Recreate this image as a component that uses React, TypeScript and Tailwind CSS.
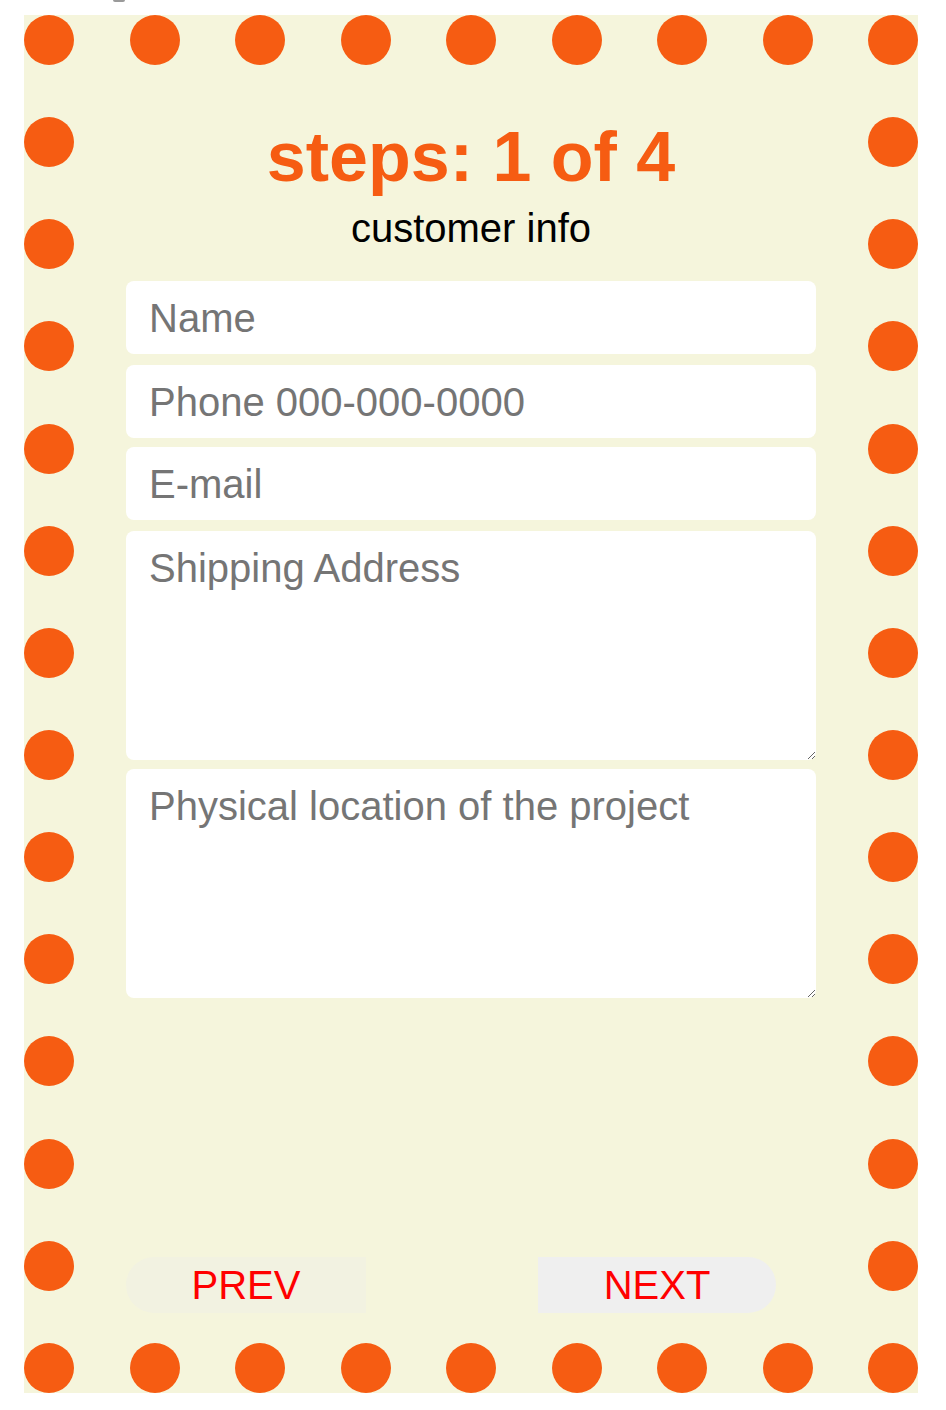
import React from "react";

const Dot = () => (
  <div className="w-[50px] h-[50px] rounded-full bg-[#f65c12] shrink-0" />
);

const range = (n: number) => Array.from({ length: n }, (_, i) => i);

export default function App() {
  return (
    <div className="w-[946px] min-h-[1410px] bg-white font-['Liberation_Sans',Arial,Helvetica,sans-serif]">
      <div className="h-[15px]">
        <div className="ml-[113px] w-[12px] h-[2px] rounded-b-full bg-[#9a9a9a]" />
      </div>
      <div className="ml-[24px] w-[894px] h-[1378px] bg-[#f5f5dc] flex">
        <div className="flex flex-col justify-between w-[50px]">
          {range(14).map((i) => (
            <Dot key={i} />
          ))}
        </div>
        <div className="flex-1 flex flex-col">
          <div className="flex justify-between px-[55.5px]">
            {range(7).map((i) => (
              <Dot key={i} />
            ))}
          </div>
          <div className="flex flex-col items-center mt-[52px]">
            <h1 className="text-[70px] leading-[80px] font-bold text-[#f65c12]">
              steps: 1 of 4
            </h1>
            <p className="text-[40px] leading-[46px] mt-[8px] text-black">
              customer info
            </p>
          </div>
          <form
            className="w-[690px] mx-auto mt-[30px] flex flex-col"
            onSubmit={(e) => e.preventDefault()}
          >
            <input
              type="text"
              placeholder="Name"
              className="h-[73px] w-full bg-white rounded-[8px] pl-[23px] pr-[21px] pt-[2px] text-[40px] leading-[46px] text-black placeholder:text-[#757575] outline-none"
            />
            <input
              type="text"
              placeholder="Phone 000-000-0000"
              className="mt-[11px] h-[73px] w-full bg-white rounded-[8px] pl-[23px] pr-[21px] pt-[2px] text-[40px] leading-[46px] text-black placeholder:text-[#757575] outline-none"
            />
            <input
              type="text"
              placeholder="E-mail"
              className="mt-[9px] h-[73px] w-full bg-white rounded-[8px] pl-[23px] pr-[21px] pt-[2px] text-[40px] leading-[46px] text-black placeholder:text-[#757575] outline-none"
            />
            <textarea
              placeholder="Shipping Address"
              className="mt-[11px] h-[229px] w-full bg-white rounded-[8px] pl-[23px] pr-[21px] pt-[14px] text-[40px] leading-[46px] text-black placeholder:text-[#757575] outline-none block"
            />
            <textarea
              placeholder="Physical location of the project"
              className="mt-[9px] h-[229px] w-full bg-white rounded-[8px] pl-[23px] pr-[21px] pt-[14px] text-[40px] leading-[46px] text-black placeholder:text-[#757575] outline-none block"
            />
          </form>
          <div className="flex-1" />
          <div className="w-[690px] mx-auto flex">
            <button
              type="button"
              className="w-[240px] h-[56px] rounded-l-full bg-[#f2f2e1] text-[40px] leading-[46px] text-[#ff0000]"
            >
              PREV
            </button>
            <button
              type="button"
              className="ml-[172px] w-[238px] h-[56px] rounded-r-full bg-[#efefef] text-[40px] leading-[46px] text-[#ff0000]"
            >
              NEXT
            </button>
          </div>
          <div className="flex justify-between px-[55.5px] mt-[30px]">
            {range(7).map((i) => (
              <Dot key={i} />
            ))}
          </div>
        </div>
        <div className="flex flex-col justify-between w-[50px]">
          {range(14).map((i) => (
            <Dot key={i} />
          ))}
        </div>
      </div>
    </div>
  );
}
